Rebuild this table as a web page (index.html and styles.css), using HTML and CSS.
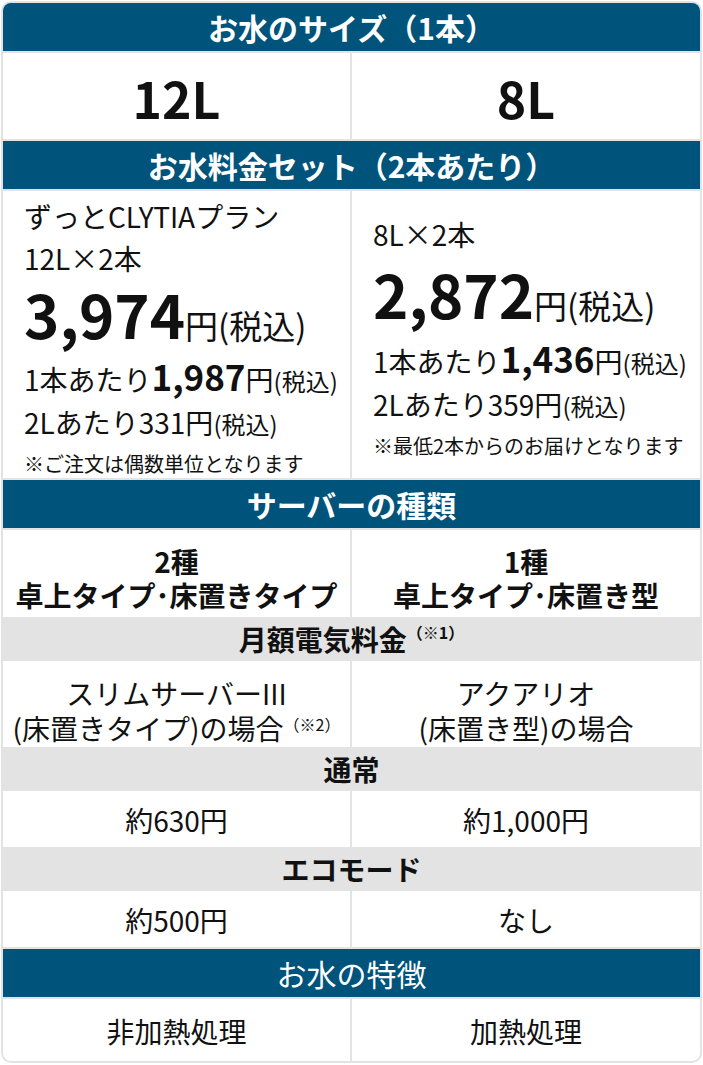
FILE: index.html
```html
<!DOCTYPE html>
<html lang="ja">
<head>
<meta charset="utf-8">
<title>お水のサイズ比較</title>
<link rel="stylesheet" href="styles.css">
</head>
<body>
<div class="spec">
  <div class="head head-top">お水のサイズ（1本）</div>
  <div class="cell size">12L</div>
  <div class="cell size">8L</div>

  <div class="head">お水料金セット（2本あたり）</div>
  <div class="cell price">
    <div class="pl">ずっとCLYTIAプラン</div>
    <div class="pl">12L×2本</div>
    <div class="big"><span class="num">3,974</span><span class="yen">円(税込)</span></div>
    <div class="per">1本あたり<span class="pnum">1,987</span><span class="pyen">円</span><span class="tax">(税込)</span></div>
    <div class="per2">2Lあたり331円<span class="tax">(税込)</span></div>
    <div class="note">※ご注文は偶数単位となります</div>
  </div>
  <div class="cell price price-r">
    <div class="pl">8L×2本</div>
    <div class="big"><span class="num">2,872</span><span class="yen">円(税込)</span></div>
    <div class="per">1本あたり<span class="pnum">1,436</span><span class="pyen">円</span><span class="tax">(税込)</span></div>
    <div class="per2">2Lあたり359円<span class="tax">(税込)</span></div>
    <div class="note">※最低2本からのお届けとなります</div>
  </div>

  <div class="head">サーバーの種類</div>
  <div class="cell server">2種<br>卓上タイプ･床置きタイプ</div>
  <div class="cell server">1種<br>卓上タイプ･床置き型</div>

  <div class="sub">月額電気料金<span class="sup">（※1）</span></div>
  <div class="cell model">スリムサーバーIII<br>(床置きタイプ)の場合<span class="sup">（※2）</span></div>
  <div class="cell model">アクアリオ<br>(床置き型)の場合</div>

  <div class="sub">通常</div>
  <div class="cell val">約630円</div>
  <div class="cell val">約1,000円</div>

  <div class="sub">エコモード</div>
  <div class="cell val">約500円</div>
  <div class="cell val">なし</div>

  <div class="head head-light">お水の特徴</div>
  <div class="cell last last-l">非加熱処理</div>
  <div class="cell last last-r">加熱処理</div>
</div>
</body>
</html>
```

FILE: styles.css
```css
html, body {
  margin: 0;
  padding: 0;
  background: #ffffff;
}

body {
  font-family: "Noto Sans CJK JP", "Noto Sans", sans-serif;
  color: #111111;
}

.spec {
  margin: 1px;
  width: 701px;
  box-sizing: border-box;
  display: grid;
  grid-template-columns: 347px 348px;
  gap: 2px;
  padding: 2px;
  background: #e3e3e3;
  border-radius: 10px;
}

.head {
  grid-column: 1 / -1;
  background: #00537a;
  color: #ffffff;
  text-align: center;
  font-size: 30px;
  font-weight: 700;
  line-height: 48px;
  height: 48px;
  white-space: nowrap;
}

.head-top {
  border-radius: 8px 8px 0 0;
}

.head-light {
  font-weight: 400;
}

.cell {
  background: #ffffff;
  text-align: center;
  font-size: 28px;
}

.size {
  font-size: 50px;
  font-weight: 700;
  height: 86px;
  line-height: 88px;
}

.price {
  text-align: left;
  height: 287px;
  box-sizing: border-box;
  padding: 6px 10px 0 21px;
  display: flex;
  flex-direction: column;
  justify-content: center;
  white-space: nowrap;
}

.pl {
  font-size: 28px;
  line-height: 42px;
}

.big {
  font-size: 60px;
  line-height: 68px;
  margin-bottom: 10px;
  font-weight: 700;
}

.price-r .pl {
  margin-bottom: 4px;
}

.price-r .big {
  margin-bottom: 12px;
}

.big .yen {
  font-size: 33px;
  font-weight: 400;
  line-height: 1;
}

.per {
  font-size: 28px;
  line-height: 44px;
}

.pnum {
  font-size: 35px;
  font-weight: 700;
  line-height: 1;
}

.pyen {
  font-size: 28px;
  line-height: 1;
}

.tax {
  font-size: 24px;
  line-height: 1;
}

.per2 {
  font-size: 28px;
  line-height: 42px;
}

.note {
  font-size: 20px;
  line-height: 34px;
  margin-top: 4px;
}

.server {
  font-weight: 700;
  height: 87px;
  box-sizing: border-box;
  padding-top: 14px;
  line-height: 34px;
}

.sub {
  grid-column: 1 / -1;
  background: #e3e3e3;
  text-align: center;
  font-size: 28px;
  font-weight: 700;
  height: 40px;
  line-height: 40px;
}

.sup {
  font-size: 16px;
  vertical-align: top;
  line-height: 26px;
  font-weight: 700;
}

.model {
  height: 86px;
  box-sizing: border-box;
  padding-top: 15px;
  line-height: 35px;
}

.model .sup {
  font-weight: 400;
}

.val {
  height: 56px;
  line-height: 58px;
}

.last {
  height: 62px;
  line-height: 64px;
}

.last-l {
  border-radius: 0 0 0 8px;
}

.last-r {
  border-radius: 0 0 8px 0;
}
```
